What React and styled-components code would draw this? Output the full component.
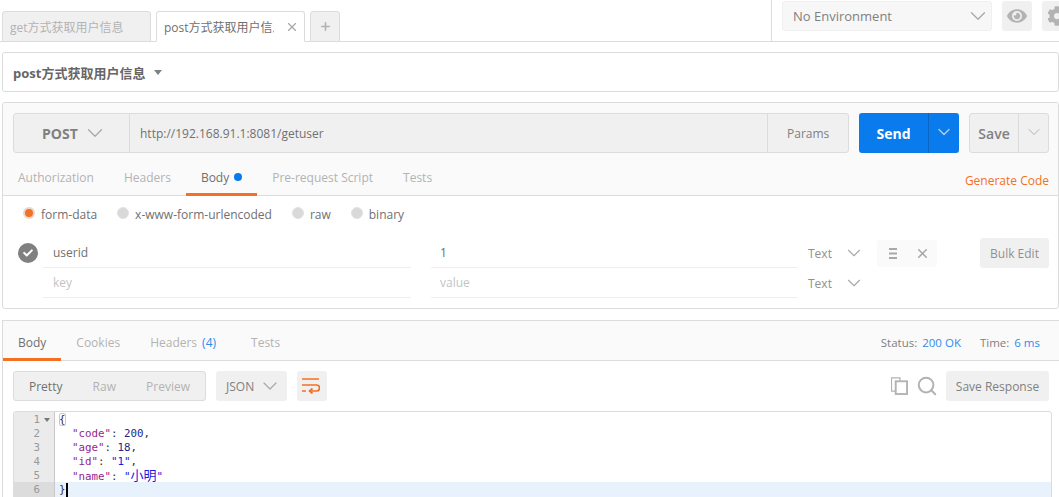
import styled, { createGlobalStyle } from "styled-components";
import { ChevronDown, X, Plus, Search } from "lucide-react";
import { FaCog, FaEye, FaCheck } from "react-icons/fa";

const Global = createGlobalStyle`
  html, body { margin: 0; background: #fff; overflow: hidden; }
  * { box-sizing: border-box; }
  body { font-family: "Open Sans", "Noto Sans CJK SC", sans-serif; font-size: 12px; color: #808080; }
`;

const Page = styled.div`
  width: 1059px;
  height: 497px;
  overflow: hidden;
`;

/* top tab strip */
const TopBar = styled.div`
  height: 42px;
  display: flex;
  justify-content: space-between;
  border-bottom: 1px solid #dcdcdc;
`;
const Tabs = styled.div`
  display: flex;
  align-items: flex-end;
  gap: 5px;
  padding-left: 2px;
  margin-bottom: -1px;
`;
const Tab = styled.div`
  width: 149px;
  height: 31px;
  display: flex;
  align-items: center;
  justify-content: space-between;
  padding: 0 5px 0 7px;
  border: 1px solid #dcdcdc;
  border-bottom-color: ${p => (p.$active ? "#fff" : "#dcdcdc")};
  border-radius: 3px 3px 0 0;
  background: ${p => (p.$active ? "#fff" : "#f0f0f0")};
  color: ${p => (p.$active ? "#707070" : "#b3b3b3")};
  white-space: nowrap;
  overflow: hidden;
`;
const TabLabel = styled.span`
  width: ${p => p.$w || 125}px;
  overflow: hidden;
`;
const AddTab = styled(Tab)`
  width: 30px;
  padding: 0;
  justify-content: center;
  color: #b3b3b3;
`;
const EnvArea = styled.div`
  width: 288px;
  flex: none;
  display: flex;
  gap: 10px;
  padding: 1px 0 0 10px;
  border-left: 1px solid #dcdcdc;
`;
const EnvSelect = styled.div`
  width: 210px;
  height: 30px;
  flex: none;
  display: flex;
  align-items: center;
  justify-content: space-between;
  padding: 0 0 0 10px;
  background: #f7f7f7;
  border: 1px solid #f0f0f0;
  border-radius: 3px;
  font-size: 13px;
  color: #808080;
`;
const IconBox = styled.div`
  width: 30px;
  height: 30px;
  flex: none;
  display: flex;
  align-items: center;
  justify-content: center;
  background: #f0f0f0;
  border-radius: 3px;
  color: #b3b3b3;
  font-size: 20px;
`;

/* collection name row */
const NameBar = styled.div`
  height: 40px;
  margin: 10px 0 10px 2px;
  width: 1057px;
  display: flex;
  align-items: center;
  gap: 9px;
  padding-left: 10px;
  border: 1px solid #dcdcdc;
  border-radius: 3px;
  font-size: 13px;
  font-weight: 700;
  color: #666;
`;
const Caret = styled.span`
  width: 0;
  height: 0;
  border-left: 4px solid transparent;
  border-right: 4px solid transparent;
  border-top: 5px solid #808080;
`;

/* request panel */
const Panel = styled.div`
  width: 1057px;
  margin-left: 2px;
  padding-bottom: 10px;
  border: 1px solid #dcdcdc;
  border-radius: 3px;
  background: #fff;
  overflow: hidden;
`;
const RequestHead = styled.div`
  height: 93px;
  background: #fafafa;
  border-bottom: 1px solid #dcdcdc;
  padding: 10px 9px 0 10px;
`;
const UrlRow = styled.div`
  display: flex;
  height: 40px;
`;
const UrlGroup = styled.div`
  width: 837px;
  display: flex;
  background: #f0f0f0;
  border: 1px solid #dcdcdc;
  border-radius: 3px;
`;
const Method = styled.div`
  width: 116px;
  display: flex;
  align-items: center;
  gap: 4px;
  padding-left: 28px;
  border-right: 1px solid #dcdcdc;
  font-size: 14px;
  font-weight: 700;
  color: #808080;
`;
const Url = styled.div`
  flex: 1;
  display: flex;
  align-items: center;
  padding-left: 10px;
  color: #707070;
`;
const Params = styled.div`
  width: 81px;
  display: flex;
  align-items: center;
  justify-content: center;
  border-left: 1px solid #dcdcdc;
  color: #808080;
`;
const SendGroup = styled.div`
  width: 100px;
  margin-left: 10px;
  display: flex;
  background: #097bed;
  border-radius: 3px;
  color: #fff;
`;
const SendLabel = styled.div`
  flex: 1;
  display: flex;
  align-items: center;
  justify-content: center;
  font-size: 14px;
  font-weight: 700;
`;
const SendMore = styled.div`
  width: 31px;
  display: flex;
  align-items: center;
  justify-content: center;
  padding-bottom: 2px;
  border-left: 1px solid #0a66c2;
  color: #b9cfe4;
`;
const SaveGroup = styled.div`
  width: 80px;
  margin-left: 10px;
  display: flex;
  background: #f0f0f0;
  border: 1px solid #dcdcdc;
  border-radius: 3px;
`;
const SaveLabel = styled.div`
  flex: 1;
  display: flex;
  align-items: center;
  justify-content: center;
  font-size: 14px;
  font-weight: 600;
  color: #808080;
`;
const SaveMore = styled.div`
  width: 30px;
  display: flex;
  align-items: center;
  justify-content: center;
  padding-bottom: 2px;
  border-left: 1px solid #dcdcdc;
  color: #b3b3b3;
`;
const SubTabs = styled.div`
  height: 43px;
  display: flex;
  align-items: stretch;
  justify-content: space-between;
`;
const SubTabList = styled.div`
  display: flex;
  align-items: stretch;
`;
const SubTab = styled.div`
  display: flex;
  align-items: center;
  gap: 5px;
  height: 43px;
  padding: ${p => p.$top ?? 8}px ${p => p.$right ?? 15}px 0 ${p => p.$left ?? 15}px;
  color: ${p => (p.$active ? "#707070" : "#b3b3b3")};
  border-bottom: 3px solid ${p => (p.$active ? "#f47023" : "transparent")};
`;
const Dot = styled.span`
  width: 8px;
  height: 8px;
  border-radius: 50%;
  background: #097bed;
`;
const Count = styled.span`
  color: #2f8ceb;
`;
const GenCode = styled.div`
  display: flex;
  align-items: center;
  padding-top: 12px;
  color: #f47023;
`;

/* body options */
const RadioRow = styled.div`
  height: 42px;
  display: flex;
  align-items: center;
  gap: 20px;
  padding: 0 0 5px 20px;
`;
const RadioItem = styled.div`
  display: flex;
  align-items: center;
  gap: 6px;
  color: #707070;
`;
const Radio = styled.span`
  width: 12px;
  height: 12px;
  margin-top: -3px;
  border-radius: 50%;
  background: ${p => (p.$on ? "#f47023" : "#d9d9d9")};
  border: ${p => (p.$on ? "2px solid #e8d8cf" : "1px solid #e2e2e2")};
`;
const KvRow = styled.div`
  height: 30px;
  display: flex;
  align-items: stretch;
`;
const CheckSlot = styled.div`
  width: 40px;
  display: flex;
  align-items: center;
  justify-content: flex-start;
  padding-left: 15px;
`;
const Check = styled.div`
  width: 20px;
  height: 20px;
  display: flex;
  align-items: center;
  justify-content: center;
  border-radius: 50%;
  background: #808080;
  color: #fff;
  font-size: 10px;
`;
const Cell = styled.div`
  width: ${p => p.$w}px;
  margin-right: ${p => p.$mr || 0}px;
  display: flex;
  align-items: center;
  padding-left: ${p => p.$pl || 10}px;
  border-bottom: 1px solid #efefef;
  color: ${p => (p.$ghost ? "#c4c4c4" : "#707070")};
`;
const TypeCell = styled.div`
  width: 70px;
  display: flex;
  align-items: center;
  justify-content: space-between;
  padding: 0 3px 0 10px;
  color: #909090;
`;
const RowActions = styled.div`
  width: 60px;
  height: 27px;
  margin: 2px 0 0 9px;
  display: flex;
  align-items: center;
  gap: 18px;
  padding: 0 0 0 12px;
  background: #fafafa;
  border-radius: 3px;
  color: #a8a8a8;
`;
const BulkEdit = styled.div`
  width: 69px;
  height: 30px;
  margin-left: 43px;
  display: flex;
  align-items: center;
  justify-content: center;
  background: #f0f0f0;
  border-radius: 3px;
  color: #909090;
`;

/* response */
const ResponsePanel = styled.div`
  margin: 11px 0 0 2px;
  width: 1057px;
  border-top: 1px solid #dcdcdc;
  border-left: 1px solid #dcdcdc;
`;
const ResponseHead = styled.div`
  height: 40px;
  display: flex;
  justify-content: space-between;
  background: #fafafa;
  border-bottom: 1px solid #dcdcdc;
`;
const ResTab = styled(SubTab)`
  height: 40px;
`;
const Meta = styled.div`
  display: flex;
  align-items: center;
  gap: 19px;
  padding: 3px 19px 0 0;
  font-size: 11.5px;
  color: #808080;
`;
const MetaValue = styled.span`
  margin-left: 5px;
  color: #2f8ceb;
`;
const Toolbar = styled.div`
  height: 50px;
  display: flex;
  align-items: center;
  padding: 0 10px 0 10px;
`;
const ViewSwitch = styled.div`
  width: 193px;
  height: 30px;
  display: flex;
  align-items: center;
  justify-content: space-between;
  padding: 0 15px;
  background: #f0f0f0;
  border: 1px solid #dcdcdc;
  border-radius: 3px;
`;
const ViewOption = styled.span`
  color: ${p => (p.$active ? "#707070" : "#b3b3b3")};
`;
const FormatSelect = styled.div`
  width: 71px;
  height: 30px;
  margin-left: 10px;
  display: flex;
  align-items: center;
  justify-content: space-between;
  padding: 0 5px 0 10px;
  background: #f0f0f0;
  border-radius: 3px;
  color: #808080;
`;
const WrapButton = styled(IconBox)`
  margin-left: 10px;
  padding-right: 2px;
`;
const ToolRight = styled.div`
  margin-left: auto;
  display: flex;
  align-items: center;
  gap: 8px;
  color: #b3b3b3;
`;
const SaveResponse = styled.div`
  width: 103px;
  height: 30px;
  display: flex;
  align-items: center;
  justify-content: center;
  background: #f0f0f0;
  border-radius: 3px;
  color: #808080;
`;
const Editor = styled.div`
  margin: 0 7px 0 10px;
  border: 1px solid #dcdcdc;
  border-radius: 3px 3px 0 0;
  font-family: "DejaVu Sans Mono", "Noto Sans CJK SC", monospace;
  font-size: 10.8px;
  line-height: 16px;
  color: #333;
`;
const Line = styled.div`
  display: flex;
  height: ${p => (p.$current ? 16 : 14)}px;
  background: ${p => (p.$current ? "#e8f2fd" : "transparent")};
`;
const Gutter = styled.div`
  position: relative;
  width: 41px;
  flex: none;
  padding-right: 14px;
  margin-right: 4px;
  text-align: right;
  color: #999;
  background: ${p => (p.$current ? "#dcdcdc" : "#ebebeb")};
  border-right: 1px solid #c8c8c8;
`;
const Fold = styled.span`
  position: absolute;
  right: 4px;
  top: 6px;
  width: 0;
  height: 0;
  border-left: 3px solid transparent;
  border-right: 3px solid transparent;
  border-top: 4px solid #777;
`;
const Code = styled.div`
  white-space: pre;
`;
const Brace = styled.span`
  outline: 1px solid #c8c8c8;
  outline-offset: -1px;
  border-radius: 2px;
`;
const Key = styled.span`
  color: #92278f;
`;
const Num = styled.span`
  color: #25258a;
`;
const Str = styled.span`
  color: #1a1ae0;
`;
const Cjk = styled.span`
  font-size: 13px;
`;
const Cursor = styled.span`
  display: inline-block;
  width: 2px;
  height: 14px;
  margin-top: 1px;
  vertical-align: top;
  background: #000;
`;

const Chevron = ({ size = 26, color = "#a8a8a8" }) => (
  <ChevronDown size={size} color={color} strokeWidth={1.2} />
);

const WrapIcon = () => (
  <svg width="18" height="16" viewBox="0 0 18 16" fill="none" stroke="#f47023" strokeWidth="1.7">
    <path d="M0 1h17M0 7h14.5a3 3 0 0 1 0 6H8M0 13h4" />
    <path d="M10.5 10.5L7.5 13l3 2.5" />
  </svg>
);

const CopyIcon = () => (
  <svg width="17" height="18" viewBox="0 0 18 18" fill="none" stroke="#b3b3b3">
    <path d="M4.5 14.5h-4v-14h9v3" strokeWidth="1.3" />
    <rect x="5" y="4" width="12" height="13.5" strokeWidth="2" />
  </svg>
);

const MenuIcon = () => (
  <svg width="8" height="11" viewBox="0 0 8 11" fill="#a8a8a8">
    <rect width="8" height="2" />
    <rect y="4.5" width="8" height="2" />
    <rect y="9" width="8" height="2" />
  </svg>
);

const App = () => {
  return (
    <Page>
      <Global />
      <TopBar>
        <Tabs>
          <Tab><TabLabel>get方式获取用户信息</TabLabel></Tab>
          <Tab $active>
            <TabLabel $w={110}>post方式获取用户信息</TabLabel>
            <X size={14} color="#a8a8a8" strokeWidth={2} />
          </Tab>
          <AddTab><Plus size={13} strokeWidth={3} /></AddTab>
        </Tabs>
        <EnvArea>
          <EnvSelect>No Environment <Chevron /></EnvSelect>
          <IconBox><FaEye /></IconBox>
          <IconBox><FaCog /></IconBox>
        </EnvArea>
      </TopBar>

      <NameBar>post方式获取用户信息 <Caret /></NameBar>

      <Panel>
        <RequestHead>
          <UrlRow>
            <UrlGroup>
              <Method>POST <Chevron size={26} /></Method>
              <Url>http://192.168.91.1:8081/getuser</Url>
              <Params>Params</Params>
            </UrlGroup>
            <SendGroup>
              <SendLabel>Send</SendLabel>
              <SendMore><ChevronDown size={20} strokeWidth={1.6} /></SendMore>
            </SendGroup>
            <SaveGroup>
              <SaveLabel>Save</SaveLabel>
              <SaveMore><ChevronDown size={20} strokeWidth={1.2} /></SaveMore>
            </SaveGroup>
          </UrlRow>
          <SubTabs>
            <SubTabList>
              <SubTab $left={5}>Authorization</SubTab>
              <SubTab>Headers</SubTab>
              <SubTab $active>Body <Dot /></SubTab>
              <SubTab>Pre-request Script</SubTab>
              <SubTab>Tests</SubTab>
            </SubTabList>
            <GenCode>Generate Code</GenCode>
          </SubTabs>
        </RequestHead>
        <RadioRow>
          <RadioItem><Radio $on />form-data</RadioItem>
          <RadioItem><Radio />x-www-form-urlencoded</RadioItem>
          <RadioItem><Radio />raw</RadioItem>
          <RadioItem><Radio />binary</RadioItem>
        </RadioRow>
        <KvRow>
          <CheckSlot><Check><FaCheck /></Check></CheckSlot>
          <Cell $w={368} $mr={20}>userid</Cell>
          <Cell $w={367} $pl={9}>1</Cell>
          <TypeCell>Text <Chevron size={22} /></TypeCell>
          <RowActions><MenuIcon /><X size={15} strokeWidth={2.5} /></RowActions>
          <BulkEdit>Bulk Edit</BulkEdit>
        </KvRow>
        <KvRow>
          <CheckSlot />
          <Cell $w={368} $mr={20} $ghost>key</Cell>
          <Cell $w={367} $pl={9} $ghost>value</Cell>
          <TypeCell>Text <Chevron size={22} /></TypeCell>
        </KvRow>
      </Panel>

      <ResponsePanel>
        <ResponseHead>
          <SubTabList>
            <ResTab $top={5} $active>Body</ResTab>
            <ResTab $top={5}>Cookies</ResTab>
            <ResTab $top={5} $right={20}>Headers <Count>(4)</Count></ResTab>
            <ResTab $top={5}>Tests</ResTab>
          </SubTabList>
          <Meta>
            <span>Status:<MetaValue>200 OK</MetaValue></span>
            <span>Time:<MetaValue>6 ms</MetaValue></span>
          </Meta>
        </ResponseHead>
        <Toolbar>
          <ViewSwitch>
            <ViewOption $active>Pretty</ViewOption>
            <ViewOption>Raw</ViewOption>
            <ViewOption>Preview</ViewOption>
          </ViewSwitch>
          <FormatSelect>JSON <Chevron size={24} /></FormatSelect>
          <WrapButton><WrapIcon /></WrapButton>
          <ToolRight>
            <CopyIcon />
            <Search size={22} strokeWidth={2.2} />
            <SaveResponse>Save Response</SaveResponse>
          </ToolRight>
        </Toolbar>
        <Editor>
          <Line><Gutter>1<Fold /></Gutter><Code><Brace>{"{"}</Brace></Code></Line>
          <Line><Gutter>2</Gutter><Code>  <Key>"code"</Key>: <Num>200</Num>,</Code></Line>
          <Line><Gutter>3</Gutter><Code>  <Key>"age"</Key>: <Num>18</Num>,</Code></Line>
          <Line><Gutter>4</Gutter><Code>  <Key>"id"</Key>: <Str>"1"</Str>,</Code></Line>
          <Line><Gutter>5</Gutter><Code>  <Key>"name"</Key>: <Str>"<Cjk>小明</Cjk>"</Str></Code></Line>
          <Line $current><Gutter $current>6</Gutter><Code>{"}"}<Cursor /></Code></Line>
        </Editor>
      </ResponsePanel>
    </Page>
  );
};

export default App;
